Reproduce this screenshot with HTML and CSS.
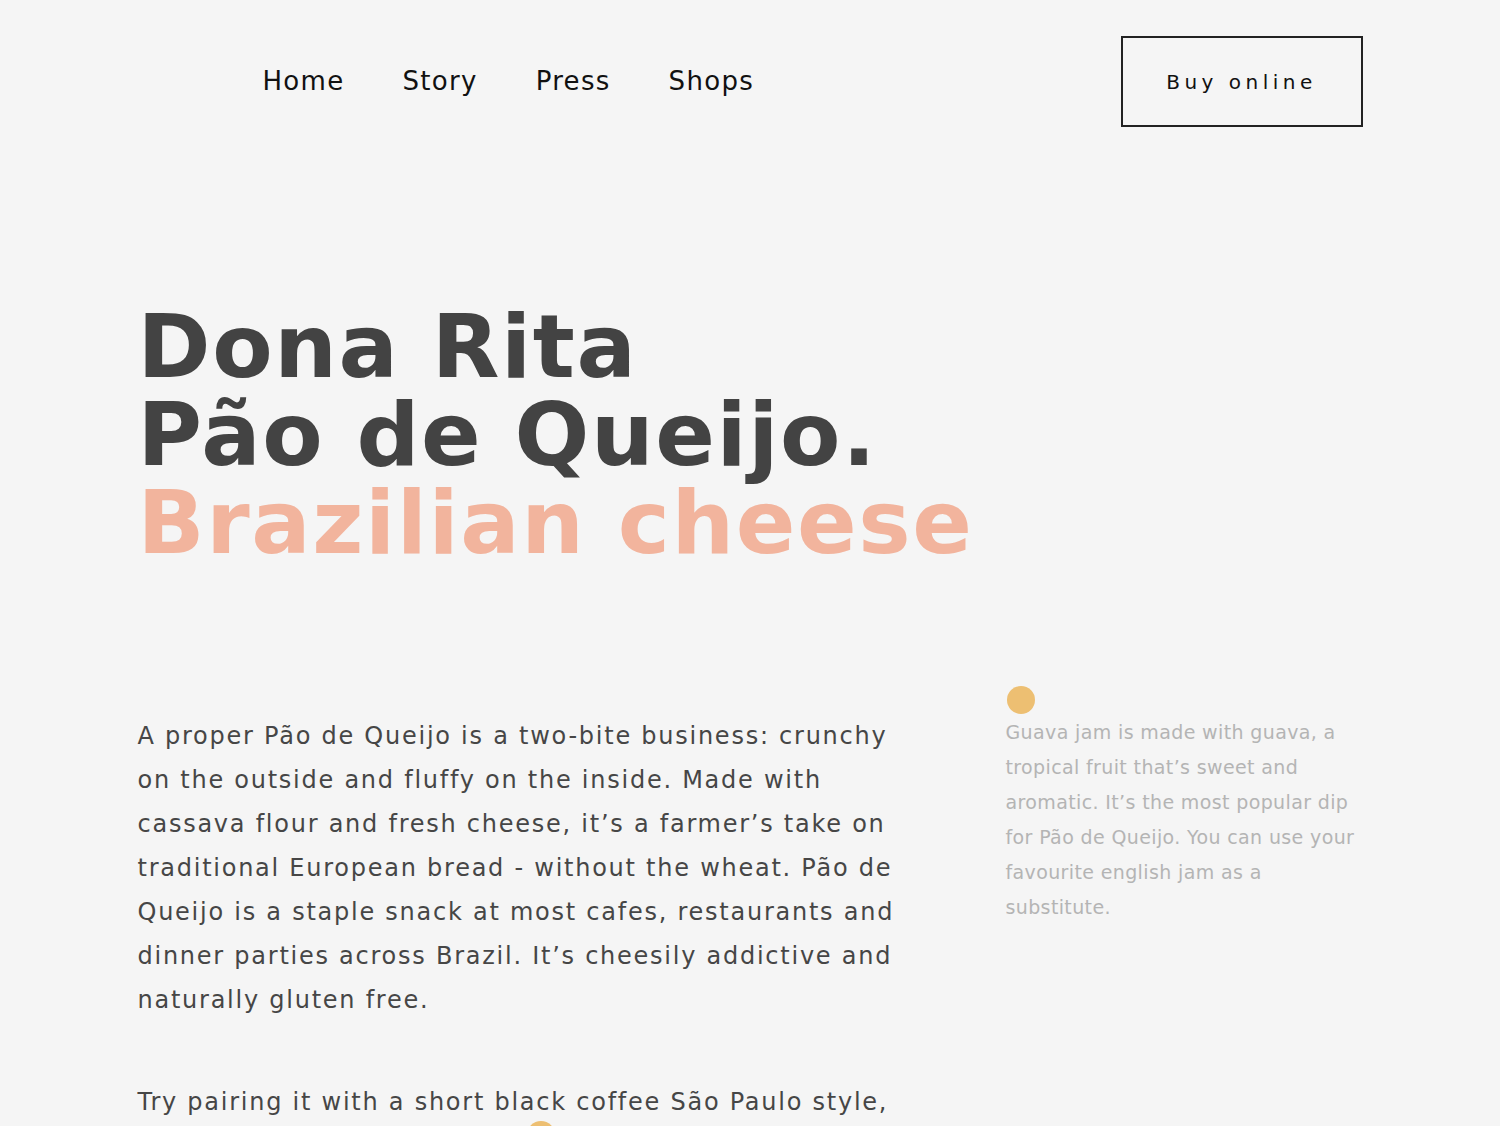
FILE: index.html
```html
<!DOCTYPE html>
<html lang="en">
<head>
<meta charset="utf-8">
<title>Dona Rita – Pão de Queijo</title>
<link rel="stylesheet" href="styles.css">
</head>
<body>
<div class="page">
  <header class="header">
    <div class="logo-space"></div>
    <nav class="nav">
      <a href="#">Home</a>
      <a href="#">Story</a>
      <a href="#">Press</a>
      <a href="#">Shops</a>
    </nav>
    <a class="buy" href="#">Buy online</a>
  </header>

  <h1 class="title">
    <span class="line">Dona Rita</span>
    <span class="line">Pão de Queijo.</span>
    <span class="line accent">Brazilian cheese</span>
  </h1>

  <section class="content">
    <div class="main">
      <p class="lead">A proper Pão de Queijo is a two-bite business: crunchy on the outside and fluffy on the inside. Made with cassava flour and fresh cheese, it’s a farmer’s take on traditional European bread - without the wheat. Pão de Queijo is a staple snack at most cafes, restaurants and dinner parties across Brazil. It’s cheesily addictive and naturally gluten free.</p>
      <p class="lead second">Try pairing it with a short black coffee São Paulo style, or dip it in guava jam for a sweet and salty treat.<span class="dot marker"></span></p>
    </div>
    <aside class="note">
      <span class="dot"></span>
      <p class="note-text">Guava jam is made with guava, a tropical fruit that’s sweet and aromatic. It’s the most popular dip for Pão de Queijo. You can use your favourite english jam as a substitute.</p>
    </aside>
  </section>
</div>
</body>
</html>
```

FILE: styles.css
```css
* { box-sizing: border-box; }

html, body {
  margin: 0;
  padding: 0;
  background: #f5f5f5;
}

body {
  font-family: "DejaVu Sans", sans-serif;
  color: #444;
}

.page {
  width: 1225px;
  margin: 0 auto;
}

.header {
  display: flex;
  align-items: center;
  padding-top: 36px;
}

.logo-space {
  width: 125px;
  flex: none;
}

.nav {
  display: flex;
  gap: 58px;
  flex: 1;
  padding-bottom: 1px;
}

.nav a {
  font-size: 26px;
  letter-spacing: 1.3px;
  color: #111;
  text-decoration: none;
}

.buy {
  width: 242px;
  height: 91px;
  border: 2px solid #222;
  display: flex;
  align-items: center;
  justify-content: center;
  font-size: 20px;
  letter-spacing: 4.5px;
  color: #111;
  text-decoration: none;
}

.title {
  margin: 176px 0 0;
  font-size: 88px;
  line-height: 88px;
  font-weight: bold;
  letter-spacing: 1.6px;
  color: #434343;
}

.title .line {
  display: block;
}

.title .accent {
  color: #f2b49d;
}

.content {
  display: grid;
  grid-template-columns: 770px 1fr;
  column-gap: 98px;
  margin-top: 119px;
}

.lead {
  margin: 28px 0 0;
  font-size: 24px;
  line-height: 44px;
  letter-spacing: 1.75px;
  color: #464646;
}

.lead.second {
  position: relative;
  margin-top: 58px;
}

.dot {
  display: block;
  width: 28px;
  height: 28px;
  border-radius: 50%;
  background: #edbf72;
}

.marker {
  position: absolute;
  left: 389px;
  top: 41px;
}

.note .dot {
  margin-left: 1px;
}

.note-text {
  margin: 1px 0 0;
  font-size: 19px;
  line-height: 35px;
  letter-spacing: 0.37px;
  color: #b4b4b4;
}
```
